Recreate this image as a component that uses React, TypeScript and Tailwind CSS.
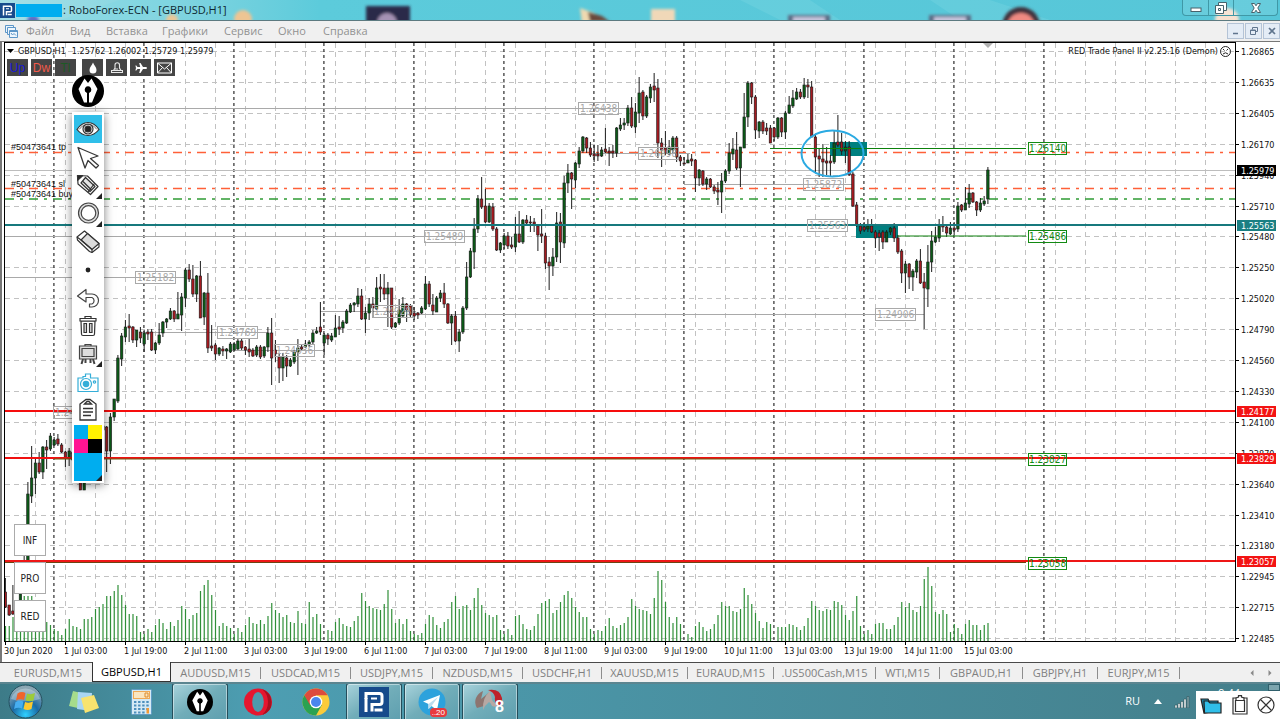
import React from "react";

const SMALL = "font-['DejaVu_Sans_Condensed','DejaVu_Sans',sans-serif]";

/* Each bar: [high, open, close, low] in chart units; a smaller value is a higher price. */
const BARS: number[][] = [
  [578, 592, 607, 608], [605, 605, 615, 616], [585, 611, 614, 615], [600, 614, 606, 618], [590, 612, 594, 615],
  [555, 580, 570, 590], [482, 570, 494, 575], [446, 496, 478, 503], [458, 478, 463, 494], [452, 463, 472, 474],
  [446, 472, 447, 479], [440, 447, 450, 469], [433, 449, 436, 451], [437, 445, 440, 446], [434, 439, 444, 446],
  [443, 445, 452, 453], [451, 452, 458, 467], [448, 458, 451, 466], [450, 452, 460, 466], [455, 460, 470, 478],
  [465, 470, 490, 490], [465, 490, 470, 490], [460, 478, 465, 483], [450, 465, 455, 470], [430, 455, 440, 460],
  [420, 440, 428, 445], [415, 430, 426, 440], [426, 427, 451, 472], [413, 451, 417, 464], [399, 417, 399, 421],
  [355, 401, 358, 403], [333, 359, 336, 366], [320, 337, 327, 342], [314, 326, 328, 342], [326, 327, 340, 343],
  [330, 340, 330, 347], [327, 332, 338, 343], [330, 344, 333, 352], [329, 332, 334, 340], [329, 332, 350, 351],
  [342, 350, 343, 354], [323, 343, 335, 345], [321, 333, 322, 337], [318, 322, 319, 328], [308, 319, 311, 320],
  [310, 311, 319, 322], [292, 319, 314, 319], [293, 315, 297, 331], [268, 298, 270, 307], [264, 270, 279, 282],
  [265, 279, 294, 297], [275, 294, 276, 302], [261, 276, 318, 318], [292, 317, 293, 325], [273, 293, 348, 353],
  [325, 346, 348, 351], [343, 345, 354, 360], [347, 354, 348, 356], [346, 349, 351, 356], [348, 351, 349, 359],
  [342, 352, 344, 353], [342, 350, 344, 351], [339, 349, 341, 350], [338, 341, 348, 350], [346, 347, 350, 355],
  [339, 349, 352, 357], [348, 350, 356, 357], [345, 355, 347, 357], [345, 347, 357, 359], [346, 356, 347, 358],
  [327, 347, 333, 352], [318, 333, 358, 385], [340, 350, 354, 362], [353, 357, 368, 383], [353, 368, 357, 381],
  [355, 358, 366, 377], [358, 366, 360, 367], [350, 362, 352, 364], [339, 352, 348, 375], [345, 347, 349, 350],
  [340, 347, 344, 348], [340, 345, 342, 347], [330, 342, 333, 345], [327, 333, 331, 334], [302, 327, 332, 335],
  [333, 343, 335, 355], [333, 335, 339, 345], [333, 340, 336, 342], [315, 337, 328, 337], [316, 327, 329, 335],
  [320, 328, 322, 333], [309, 323, 311, 324], [303, 312, 305, 313], [302, 305, 303, 312], [288, 304, 296, 307],
  [289, 296, 319, 320], [307, 319, 313, 333], [298, 313, 304, 320], [297, 304, 308, 318], [277, 309, 288, 310],
  [274, 287, 289, 302], [274, 288, 294, 300], [282, 294, 288, 327], [288, 288, 327, 329], [322, 327, 323, 328],
  [299, 323, 310, 325], [297, 316, 304, 318], [303, 304, 310, 322], [304, 306, 315, 317], [307, 313, 316, 320],
  [312, 313, 315, 319], [306, 313, 308, 314], [276, 309, 284, 310], [281, 284, 304, 307], [294, 305, 311, 315],
  [296, 312, 298, 312], [290, 298, 293, 302], [283, 293, 304, 308], [303, 304, 323, 324], [314, 323, 316, 345],
  [311, 316, 341, 342], [329, 341, 332, 352], [306, 332, 308, 334], [262, 308, 277, 310], [248, 277, 251, 278],
  [218, 252, 229, 269], [195, 229, 199, 233], [177, 199, 207, 209], [189, 206, 222, 223], [203, 222, 206, 223],
  [203, 207, 229, 231], [227, 229, 250, 251], [242, 250, 243, 253], [233, 245, 236, 249], [232, 236, 246, 249],
  [237, 245, 247, 249], [217, 247, 234, 252], [211, 234, 242, 243], [219, 242, 220, 244], [215, 220, 223, 225],
  [216, 222, 223, 232], [218, 222, 224, 232], [225, 226, 235, 251], [209, 234, 236, 243], [233, 236, 263, 269],
  [257, 262, 266, 290], [248, 266, 257, 276], [212, 257, 223, 262], [213, 222, 242, 263], [176, 243, 183, 248],
  [164, 183, 173, 193], [172, 173, 179, 209], [162, 180, 163, 188], [147, 164, 151, 168], [136, 151, 137, 153],
  [137, 138, 148, 153], [142, 148, 155, 157], [145, 154, 156, 162], [145, 154, 156, 161], [147, 156, 150, 157],
  [128, 149, 152, 153], [147, 151, 153, 166], [145, 151, 153, 158], [127, 153, 128, 157], [118, 129, 125, 131],
  [118, 125, 123, 130], [105, 123, 108, 126], [97, 108, 126, 128], [103, 127, 112, 133], [77, 113, 93, 123],
  [90, 92, 116, 120], [95, 116, 97, 118], [84, 98, 87, 103], [73, 86, 90, 102], [79, 88, 143, 158],
  [138, 143, 150, 167], [131, 148, 153, 155], [140, 154, 147, 155], [136, 150, 138, 153], [136, 138, 157, 162],
  [155, 157, 161, 166], [157, 163, 164, 164], [154, 163, 160, 163], [154, 159, 161, 166], [159, 160, 178, 192],
  [169, 178, 170, 186], [170, 171, 184, 186], [177, 184, 179, 190], [178, 179, 187, 188], [185, 187, 191, 194],
  [182, 190, 192, 205], [173, 192, 181, 213], [169, 181, 171, 183], [143, 171, 153, 174], [138, 154, 149, 160],
  [132, 150, 168, 170], [147, 168, 147, 187], [93, 148, 117, 148], [81, 117, 83, 127], [82, 83, 97, 104],
  [95, 97, 130, 139], [121, 131, 122, 138], [120, 122, 131, 134], [123, 128, 131, 135], [125, 128, 143, 143],
  [127, 128, 137, 141], [117, 137, 118, 139], [117, 118, 132, 137], [111, 132, 113, 139], [96, 113, 105, 114],
  [90, 106, 98, 108], [88, 99, 92, 100], [89, 92, 97, 99], [78, 97, 85, 99], [79, 85, 87, 98],
  [81, 87, 137, 137], [135, 137, 157, 172], [148, 156, 159, 177], [144, 159, 162, 177], [147, 161, 163, 175],
  [155, 161, 163, 177], [130, 162, 143, 164], [115, 142, 145, 147], [133, 142, 151, 155], [141, 151, 147, 163],
  [141, 147, 175, 176], [172, 174, 206, 207], [202, 205, 225, 227], [223, 226, 231, 234], [222, 227, 230, 232],
  [219, 229, 226, 232], [219, 226, 232, 233], [230, 232, 238, 248], [230, 233, 237, 251], [230, 232, 242, 249],
  [230, 242, 232, 242], [227, 232, 228, 235], [223, 228, 238, 242], [235, 238, 252, 254], [249, 251, 273, 283],
  [261, 273, 264, 293], [263, 264, 277, 289], [269, 277, 271, 291], [259, 272, 261, 278], [249, 261, 283, 284],
  [273, 282, 288, 329], [245, 289, 262, 307], [231, 262, 241, 272], [227, 242, 237, 243], [219, 238, 226, 242],
  [216, 225, 227, 232], [225, 227, 233, 237], [222, 234, 228, 235], [222, 228, 230, 235], [202, 229, 206, 232],
  [204, 205, 210, 212], [187, 210, 203, 210], [184, 204, 193, 208], [192, 193, 202, 203], [201, 202, 210, 216],
  [198, 210, 203, 212], [196, 204, 201, 206], [167, 199, 170, 204],
];

const VOLUMES: number[] = [
  16, 16, 25, 30, 40, 46, 46, 46, 38, 30, 24, 20, 17, 13, 11, 7, 13, 23, 16, 15, 13, 23, 23, 25, 33, 35, 38, 46, 46, 51,
  57, 47, 37, 28, 28, 26, 10, 8, 13, 10, 17, 23, 19, 13, 20, 16, 22, 36, 33, 23, 27, 29, 51, 57, 62, 47, 32, 16, 19, 16,
  14, 8, 14, 10, 17, 25, 19, 18, 22, 18, 26, 39, 32, 29, 25, 27, 20, 19, 31, 19, 18, 40, 25, 28, 18, 0, 12, 11, 20, 24,
  18, 16, 15, 21, 26, 49, 41, 36, 34, 33, 32, 38, 52, 33, 19, 23, 18, 23, 11, 8, 7, 9, 18, 27, 25, 17, 14, 20, 23, 40,
  46, 33, 36, 37, 32, 44, 54, 37, 29, 27, 25, 27, 12, 8, 13, 7, 26, 27, 18, 13, 12, 16, 28, 39, 41, 43, 29, 32, 40, 47,
  51, 44, 35, 30, 25, 25, 13, 8, 12, 11, 16, 24, 16, 14, 17, 19, 25, 43, 36, 33, 32, 31, 28, 44, 71, 62, 40, 25, 19, 25,
  18, 0, 8, 5, 16, 20, 15, 11, 13, 18, 27, 40, 36, 36, 31, 30, 33, 54, 47, 38, 29, 21, 14, 20, 18, 0, 15, 15, 15, 18,
  17, 15, 12, 16, 24, 41, 36, 32, 31, 33, 32, 41, 40, 37, 27, 22, 31, 46, 16, 8, 12, 8, 18, 19, 19, 13, 13, 17, 25, 40,
  35, 39, 32, 30, 36, 63, 75, 56, 30, 28, 32, 28, 10, 18, 14, 8, 18, 22, 17, 17, 12, 17, 19,
];

const PRICES = [
  "1.26865", "1.26635", "1.26405", "1.26170", "1.25940", "1.25710", "1.25480", "1.25250", "1.25020", "1.24790",
  "1.24560", "1.24330", "1.24100", "1.23870", "1.23640", "1.23410", "1.23180", "1.22945", "1.22715", "1.22485",
];

const DATES = [
  "30 Jun 2020", "1 Jul 03:00", "1 Jul 19:00", "2 Jul 11:00", "3 Jul 03:00", "3 Jul 19:00", "6 Jul 11:00",
  "7 Jul 03:00", "7 Jul 19:00", "8 Jul 11:00", "9 Jul 03:00", "9 Jul 19:00", "10 Jul 11:00", "13 Jul 03:00",
  "13 Jul 19:00", "14 Jul 11:00", "15 Jul 03:00",
];

/* Swing levels: [text, label x, y, line start, line end] */
const LEVELS: [string, number, number, number, number][] = [
  ["1.26438", 579, 108, 5, 628],
  ["1.25182", 136, 277, 5, 185],
  ["1.24769", 218, 332, 140, 268],
  ["1.24636", 275, 350, 225, 323],
  ["1.24928", 373, 311, 320, 416],
  ["1.25489", 425, 236, 5, 474],
  ["1.24906", 876, 314, 413, 924],
  ["1.26098", 639, 153, 590, 690],
  ["1.25872", 804, 184, 684, 854],
  ["1.25563", 808, 225, 800, 856],
  ["1.24173", 54, 412, 54, 95],
];

const TARGETS: [string, number][] = [
  ["1.26140", 148],
  ["1.25486", 236],
  ["1.23827", 459],
  ["1.23058", 563],
];

const gridY = (k: number) => Math.round(51 + k * 30.9) + 0.5;

function PriceChart() {
  return (
    <svg className="absolute inset-0 h-full w-full" role="img" aria-label="GBPUSD H1">
      <g transform="translate(-5 -43)">
        <g stroke="#c2c2c2" strokeWidth="1" strokeDasharray="5 4">
          {PRICES.map((p, k) => (
            <line key={p} x1="5" x2="110%" y1={gridY(k)} y2={gridY(k)} />
          ))}
          {Array.from({ length: 80 }, (_, k) => (
            <line key={k} x1={35.5 + k * 30} x2={35.5 + k * 30} y1="43" y2="120%" />
          ))}
        </g>
        <g stroke="#3c3c3c" strokeWidth="1.3" strokeDasharray="3 3">
          {Array.from({ length: 12 }, (_, k) => (
            <line key={k} x1={53.9 + k * 90} x2={53.9 + k * 90} y1="43" y2="120%" />
          ))}
        </g>
        <path d="M983 43h10l-5 5z" fill="#b0b0b0" />

        <line x1="5" x2="110%" y1="170.5" y2="170.5" stroke="#bdbdbd" />
        <g stroke="#ff6038" strokeWidth="1.4" strokeDasharray="9 6 3 6">
          <line x1="5" x2="110%" y1="152.5" y2="152.5" />
          <line x1="5" x2="110%" y1="188.5" y2="188.5" />
        </g>
        <line x1="5" x2="110%" y1="199" y2="199" stroke="#2f9c35" strokeWidth="1.4" strokeDasharray="9 6 3 6" />

        {LEVELS.map(([t, , y, a, b]) => (
          <line key={t} x1={a} x2={b} y1={y + 0.5} y2={y + 0.5} stroke="#a9a9a9" />
        ))}

        <rect x="830" y="142" width="37" height="14" fill="#008080" />
        <rect x="856" y="224" width="42" height="14" fill="#008080" />

        <g stroke="#2f8f38" strokeWidth="1.2">
          {VOLUMES.map((v, i) =>
            v ? <line key={i} x1={5.5 + i * 3.75} x2={5.5 + i * 3.75} y1={642 - v} y2="642" /> : null,
          )}
        </g>

        {BARS.map(([h, o, c, l], i) => {
          const x = 5.4 + i * 3.75;
          return (
            <g key={i}>
              <line x1={x} x2={x} y1={h} y2={l} stroke="#1c1c1c" strokeWidth="1" />
              <rect
                x={x - 1.2}
                y={Math.min(o, c)}
                width="2.4"
                height={Math.max(1, Math.abs(c - o))}
                fill={c < o ? "#0b5a17" : "#a51a20"}
                stroke="#161616"
                strokeWidth="0.6"
              />
            </g>
          );
        })}

        <line x1="5" x2="110%" y1="225" y2="225" stroke="#16797d" strokeWidth="2" />
        <line x1="5" x2="110%" y1="411" y2="411" stroke="#f60d0d" strokeWidth="2" />
        <line x1="5" x2="110%" y1="458" y2="458" stroke="#f01010" strokeWidth="2" />
        <line x1="5" x2="110%" y1="561" y2="561" stroke="#ee1616" strokeWidth="2" />
        <line x1="54" x2="1026" y1="459" y2="459" stroke="#6d5a12" strokeWidth="1" />
        <line x1="5" x2="1026" y1="562.5" y2="562.5" stroke="#6b4512" strokeWidth="1" />
        <line x1="770" x2="1026" y1="148.5" y2="148.5" stroke="#0c800c" strokeWidth="1" />
        <line x1="898" x2="1026" y1="236" y2="236" stroke="#0c800c" strokeWidth="1" />

        <g className={SMALL} fontSize="10">
          {LEVELS.map(([t, x, y]) => (
            <g key={t}>
              <rect x={x - 0.5} y={y - 5.5} width="40" height="12" fill="none" stroke="#a9a9a9" />
              <text x={x + 1} y={y + 4} fill="#a9a9a9">{t}</text>
            </g>
          ))}
          {TARGETS.map(([t, y]) => (
            <g key={t}>
              <rect x="1028.5" y={y - 5.5} width="38" height="12" fill="none" stroke="#128a12" />
              <text x="1029" y={y + 4} fill="#128a12">{t}</text>
            </g>
          ))}
        </g>
        <ellipse cx="832.5" cy="153.5" rx="31" ry="23" fill="none" stroke="#2baae2" strokeWidth="2" />
        <g className="font-['Liberation_Sans',sans-serif]" fontSize="9" fill="#111">
          <text x="11" y="150">#50473641 tp</text>
          <text x="11" y="187">#50473641 sl</text>
          <text x="11" y="197">#50473641 buy</text>
        </g>
      </g>
    </svg>
  );
}

function PriceAxis() {
  const marks: [string, number, string][] = [
    ["1.25979", 170, "#000000"],
    ["1.25563", 225, "#1a7f83"],
    ["1.24177", 411, "#f31313"],
    ["1.23829", 458, "#f31313"],
    ["1.23057", 561, "#f31313"],
  ];
  return (
    <svg className={`h-full w-11 shrink-0 ${SMALL}`} fontSize="9">
      <g transform="translate(-1236 -42)">
        {PRICES.map((p, k) => (
          <g key={p}>
            <line x1="1236" x2="1239" y1={gridY(k)} y2={gridY(k)} stroke="#000" />
            <text x="1241" y={gridY(k) + 3} fill="#111">{p}</text>
          </g>
        ))}
        {marks.map(([t, y, c]) => (
          <g key={t}>
            <rect x="1237" y={y - 5} width="39" height="11" fill={c} />
            <text x="1241" y={y + 3.5} fill="#fff">{t}</text>
          </g>
        ))}
      </g>
    </svg>
  );
}

function PenNib({ className }: { className: string }) {
  return (
    <svg viewBox="0 0 32 32" className={className} aria-hidden="true">
      <circle cx="16" cy="16" r="16" fill="#000" />
      <path d="M12.500 3.500 6.500 14l5.500 13.500H15V17.800a3.300 3.300 0 1 1 2 0V27.500h3L25.500 14 19.500 3.500 16 8z" fill="#fff" />
      <circle cx="16" cy="14.800" r="2.900" fill="#000" />
    </svg>
  );
}

function RoboLogo({ className }: { className: string }) {
  return (
    <svg viewBox="0 0 30 30" className={className} aria-hidden="true">
      <rect width="30" height="30" fill="#164a8b" />
      <path d="M7 12V6.500h13.500q2.500 0 2.500 2.500v6q0 2.500-2.500 2.500H13v7" fill="none" stroke="#fff" strokeWidth="3" />
      <path d="M15.500 23h8" stroke="#fff" strokeWidth="3" />
      <path d="M7 11v14" stroke="#fff" strokeWidth="3" />
      <path d="M12 11.500h6" stroke="#fff" strokeWidth="2" />
    </svg>
  );
}

const MENU: [string, string][] = [
  ["Файл", "w-[44px]"], ["Вид", "w-[36px]"], ["Вставка", "w-[56px]"], ["Графики", "w-[62px]"],
  ["Сервис", "w-[54px]"], ["Окно", "w-[45px]"], ["Справка", "w-[60px]"],
];

function TitleBar() {
  return (
    <header className="relative flex h-5 shrink-0 items-center overflow-hidden bg-linear-to-r from-[#a5dfe6] via-[#5ccbdb] via-25% to-[#56c6d8]">
      <svg className="absolute inset-0 h-full w-full" aria-hidden="true">
        <defs>
          <filter id="soft" x="-30%" y="-30%" width="160%" height="160%"><feGaussianBlur stdDeviation="1.500" /></filter>
        </defs>
        <path d="M120 0h60l-40 20H60zM740 0h70l30 20h-60zM930 0h60l60 20h-90z" fill="#7bd7e3" opacity=".35" />
        <g filter="url(#soft)">
          <rect x="366" y="6" width="44" height="18" fill="#2c2c4a" />
          <circle cx="387" cy="23" r="10" fill="#a592b4" />
          <path d="M580 8l14 5 10 10h-22z" fill="#f0d9b0" />
          <path d="M588 12l14 4 8 6h-20z" fill="#6b4a3c" />
          <rect x="651" y="9" width="24" height="16" fill="#f0d8b8" />
          <rect x="788" y="15" width="42" height="9" fill="#5b6c85" />
          <rect x="793" y="17" width="32" height="8" fill="#c6c4dc" />
          <rect x="929" y="15" width="42" height="9" fill="#5b6c85" />
          <rect x="934" y="17" width="32" height="8" fill="#c6c4dc" />
          <circle cx="1021" cy="26" r="19" fill="#40323c" />
          <circle cx="1021" cy="27" r="14" fill="#f08a82" />
          <circle cx="243" cy="19" r="9" fill="#eec593" />
          <circle cx="172" cy="20" r="6" fill="#e8c898" />
          <circle cx="33" cy="21" r="6" fill="#5f6ec4" />
          <circle cx="1227" cy="20" r="12" fill="#f7e1d0" />
        </g>
      </svg>
      <RoboLogo className="relative h-[15px] w-[15px]" />
      <span className="relative ml-px h-[13px] w-[46px] bg-[#00adef]" />
      <h1 className="relative ml-px font-['Open_Sans',sans-serif] text-[11px] whitespace-nowrap text-[#0d2830]">
        : RoboForex-ECN - [GBPUSD,H1]
      </h1>
      <div className="relative mr-[2px] ml-auto flex h-4 self-start rounded-b border border-t-0 border-[#3f98a6] bg-white/10">
        <button aria-label="Свернуть" className="flex w-[26px] items-center justify-center border-r border-[#3f98a6]">
          <svg className="h-3 w-3" viewBox="0 0 12 12"><rect x="1" y="6" width="10" height="3.500" fill="#fff" stroke="#47636c" /></svg>
        </button>
        <button aria-label="Восстановить" className="flex w-[25px] items-center justify-center border-r border-[#3f98a6]">
          <svg className="h-3 w-3" viewBox="0 0 12 12" fill="#fff" stroke="#47636c"><path d="M3.500 .5h8v8h-8z" /><path d="M.5 3.500h8v8h-8z" /><path d="M3.500 6.500h2v2h-2z" /></svg>
        </button>
        <button aria-label="Закрыть" className="flex w-[43px] items-center justify-center">
          <svg className="h-3 w-3" viewBox="0 0 12 12"><path d="M1.500 1.500h3L6 3.800l1.500-2.300h3L7.800 6l2.700 4.500h-3L6 8.200l-1.500 2.300h-3L4.200 6z" fill="#fff" stroke="#47636c" /></svg>
        </button>
      </div>
    </header>
  );
}

function MenuBar() {
  const box = "flex h-4 w-[17px] items-center justify-center border border-[#b4c3d6] bg-[#e4ecf6]";
  return (
    <nav className="flex h-[21px] shrink-0 items-center border-t border-[#5c7a80] bg-[#f0f0f0] pl-[5px] font-['Open_Sans',sans-serif] text-[11px] text-[#929292]">
      <svg className="mr-2 h-[13px] w-[13px]" viewBox="0 0 13 13" fill="#eef6fd" stroke="#5d96c8" aria-hidden="true">
        <path d="M.5.5h8v7h-8z" /><path d="M2.500 2.500h8v7h-8z" /><path d="M4.500 5.500h8v7h-8z" /><path d="M6 8l1.500 2L9 8.500l2 2M4.500 6.500h8" />
      </svg>
      {MENU.map(([label, w]) => (
        <button key={label} className={`text-left leading-[18px] ${w}`}>{label}</button>
      ))}
      <div className="ml-auto flex gap-px">
        <button aria-label="Свернуть график" className={box}><svg className="h-2 w-2" viewBox="0 0 8 8"><path d="M1 6.500h5" stroke="#60758e" strokeWidth="1.500" /></svg></button>
        <button aria-label="Восстановить график" className={box}><svg className="h-2 w-2" viewBox="0 0 8 8" fill="none" stroke="#60758e"><path d="M2.500 2.500v-2h5v4h-2M.5 3h5v4.500h-5zM.5 3.500h5" /></svg></button>
        <button aria-label="Закрыть график" className={box}><svg className="h-2 w-2" viewBox="0 0 8 8"><path d="M1 1l6 6M7 1L1 7" stroke="#60758e" strokeWidth="1.700" /></svg></button>
      </div>
    </nav>
  );
}

function QuickButtons() {
  const b = "flex h-[17px] w-[21px] items-center justify-center bg-[#454545] font-['Liberation_Sans',sans-serif] text-[12px] leading-none";
  return (
    <div className="flex gap-[6px]">
      <div className="flex gap-[3px]">
        <button className={`${b} text-[#1616d8]`}>Up</button>
        <button className={`${b} text-[#f2594a]`}>Dw</button>
        <button className={`${b} text-[#1d5a24]`}>Tl</button>
      </div>
      <div className="flex gap-[3px]">
        <button aria-label="Цвет" className={b}><svg className="h-3 w-3" viewBox="0 0 12 12"><path d="M6 .5C7 3.500 9.500 5 9.500 8a3.500 3.500 0 0 1-7 0C2.500 5 5 3.500 6 .5z" fill="#fff" /></svg></button>
        <button aria-label="Звонок" className={b}><svg className="h-3 w-3" viewBox="0 0 12 12" fill="none" stroke="#e8e8e8" strokeWidth="1.100"><path d="M.5 10.500h11v-2h-11zM2.500 8.500l1.500-2.500V3a2 2 0 0 1 4.500 0v3l1.500 2.500M7 7H3.500" /></svg></button>
        <button aria-label="Самолёт" className={b}><svg className="h-3 w-3" viewBox="0 0 12 12"><path d="M12 6c0 .7-.8 1-1.500 1H8L5.500 11H4.200l1-4H2.500L1.300 8.500H.4L1 6 .4 3.500h.9L2.500 5h2.700l-1-4h1.300L8 5h2.500c.7 0 1.500.3 1.500 1z" fill="#fff" /></svg></button>
        <button aria-label="Почта" className={b}><svg className="h-3 w-[15px]" viewBox="0 0 15 12" fill="none" stroke="#fff"><path d="M.5 1h14v10H.5zM.5 1l7 6 7-6M.5 11l5-5.500M14.500 11l-5-5.500" /></svg></button>
      </div>
    </div>
  );
}

const tool = "relative flex h-[28px] w-[28px] shrink-0 items-center justify-center";
const ico = "h-6 w-6";

function Corner() {
  return (
    <svg className="absolute right-0 bottom-0 h-[6px] w-[6px]" viewBox="0 0 6 6" aria-hidden="true"><path d="M6 0v6H0z" fill="#222" /></svg>
  );
}

function DrawTools() {
  return (
    <aside className="absolute top-[69px] left-[67px] flex w-8 flex-col items-center bg-white pt-[3px] pb-[2px] shadow-[0_2px_9px_rgba(0,0,0,0.5)]">
      <button aria-label="Показать" className={`${tool} bg-[#30bfe9]`}>
        <svg className={ico} viewBox="0 0 24 24" fill="#fff" stroke="#333" strokeWidth="1.200">
          <path d="M1 12.500C5 6.500 9 5.500 12 5.500s7 1 11 7c-4 5-7.500 6-11 6s-7-1-11-6z" />
          <circle cx="12" cy="12" r="5" /><circle cx="12" cy="12" r="3" fill="#222" />
          <path d="M3 12.500c3-3.800 6-5 9-5s6 1.200 9 5" fill="none" strokeWidth=".7" />
        </svg>
      </button>
      <button aria-label="Курсор" className={tool}>
        <svg className={ico} viewBox="0 0 24 24" fill="#fff" stroke="#383838" strokeWidth="1.300" strokeLinejoin="round"><path d="M2 2.500l20 8.500-7.500 2.500 8 7-2.500 2.500-8-7.500-3 7.500z" /></svg>
      </button>
      <button aria-label="Карандаш" className={tool}>
        <svg className={ico} viewBox="0 0 24 24" fill="#fff" stroke="#333" strokeWidth="1.200" strokeLinejoin="round"><path d="M1.500 2.500l10 .5L22 13.500l-7.500 8L2 11z" /><path d="M1.500 2.500l5 .2-4.800 4.600z" fill="#222" /><path d="M5 10l4.500-5.500 9.500 9-5 5z" fill="#e4e4e4" /><path d="M7 8.500l8.500 8.500M18.500 10.500L12 19" fill="none" /></svg>
        <Corner />
      </button>
      <button aria-label="Фигура" className={tool}>
        <svg className={ico} viewBox="0 0 24 24" fill="#fff" stroke="#444" strokeWidth="1.200"><circle cx="12.500" cy="12" r="10" fill="#ddd" /><circle cx="12.500" cy="12" r="7.300" /></svg>
        <Corner />
      </button>
      <button aria-label="Ластик" className={tool}>
        <svg className={ico} viewBox="0 0 24 24" fill="#fff" stroke="#333" strokeWidth="1.200" strokeLinejoin="round"><path d="M1 8l7.500-6L23 14.500V18l-7 5.500-2.500-1L1.500 11z" /><path d="M5 11l6.500-6.500L23 14.500l-7 6z" fill="#dcdcdc" /><path d="M1 8l4 3 11 9.500v3" fill="none" /></svg>
      </button>
      <button aria-label="Толщина" className={tool}>
        <svg className={ico} viewBox="0 0 24 24"><circle cx="12" cy="13" r="2.400" fill="#222" /></svg>
      </button>
      <button aria-label="Отменить" className={tool}>
        <svg className={ico} viewBox="0 0 24 24" fill="#fff" stroke="#444" strokeWidth="1.200" strokeLinejoin="round"><path d="M1.500 11L10 4.500V9h6a6.500 6.500 0 0 1 0 13h-2.500v-3H16a3.300 3.500 0 0 0 0-6.500h-6V17z" /></svg>
      </button>
      <button aria-label="Удалить" className={tool}>
        <svg className={ico} viewBox="0 0 24 24" fill="#fff" stroke="#333" strokeWidth="1.200"><path d="M5 8h14l-.5 13q0 1.500-1.500 1.500H7q-1.500 0-1.500-1.500z" /><path d="M4 5.500h16V8H4zM9 5.500v-2h6v2" /><path d="M8 10.500h2.500v9H8zM13.500 10.500H16v9h-2.500z" fill="#ddd" /></svg>
      </button>
      <button aria-label="Доска" className={tool}>
        <svg className={ico} viewBox="0 0 24 24" fill="#ddd" stroke="#444" strokeWidth="1.200"><path d="M7 18l-1.500 5M17 18l1.500 5M9.500 18v4M14.500 18v4" fill="none" strokeWidth="2" /><path d="M9 5.500V3.500h6v2M3.500 5h17v13h-17z" /><path d="M6 7.500h12v8H6z" /></svg>
        <Corner />
      </button>
      <button aria-label="Снимок" className={tool}>
        <svg className={ico} viewBox="0 0 24 24" fill="#fff" stroke="#35aed8" strokeWidth="1.200"><path d="M2 9h5V7.500h2.500V5h5v4H22v13.500H2z" /><circle cx="10" cy="15" r="5.500" /><circle cx="10" cy="15" r="2.700" fill="#35aed8" /><circle cx="18.500" cy="13" r="1.200" /></svg>
      </button>
      <button aria-label="Буфер" className={tool}>
        <svg className={ico} viewBox="0 0 24 24" fill="#fff" stroke="#333" strokeWidth="1.300"><path d="M4 7l6-4.500h4L20 7v16H4z" /><path d="M8.500 7L11 4.500h2L15.500 7zM7 11.500h10M7 15h10M7 18.500h8" /></svg>
      </button>
      <div className="mt-[2px] grid w-[28px] grid-cols-2">
        <button aria-label="Голубой" className="h-[14px] bg-[#00adef]" />
        <button aria-label="Жёлтый" className="h-[14px] bg-[#fff200]" />
        <button aria-label="Пурпурный" className="h-[14px] bg-[#ff1493]" />
        <button aria-label="Чёрный" className="h-[14px] bg-black" />
      </div>
      <button aria-label="Текущий цвет" className={`${tool} bg-[#00adef]`}><Corner /></button>
    </aside>
  );
}

const TABS: [string, string][] = [
  ["AUDUSD,M15", "w-[90px]"], ["USDCAD,M15", "w-[90px]"], ["USDJPY,M15", "w-[82px]"], ["NZDUSD,M15", "w-[90px]"],
  ["USDCHF,H1", "w-[79px]"], ["XAUUSD,M15", "w-[86px]"], ["EURAUD,M15", "w-[86px]"], [".US500Cash,M15", "w-[102px]"],
  ["WTI,M15", "w-[64px]"], ["GBPAUD,H1", "w-[83px]"], ["GBPJPY,H1", "w-[75px]"], ["EURJPY,M15", "w-[82px]"],
];

function ChartTabs() {
  return (
    <div role="tablist" className="flex h-5 shrink-0 items-stretch border-t border-[#4a4a4a] bg-[#f0f0f0] pl-1 font-['Open_Sans',sans-serif] text-[11px] whitespace-nowrap text-[#808080]">
      <button role="tab" className="w-[88px] leading-[17px]">EURUSD,M15</button>
      <button role="tab" aria-selected="true" className="-mt-px w-[79px] border border-t-0 border-[#333] bg-white leading-[17px] text-black">GBPUSD,H1</button>
      {TABS.map(([t, w]) => (
        <button key={t} role="tab" className={`${w} flex items-center justify-center`}>
          <span className="flex-1 leading-[17px]">{t}</span>
          <span className="h-3 w-px bg-[#8d8d8d]" />
        </button>
      ))}
      <div className="mr-[7px] ml-auto flex items-center gap-3">
        <button aria-label="Назад"><svg className="h-[6px] w-[6px]" viewBox="0 0 6 6"><path d="M4.500 0v6l-3-3z" fill="#888" /></svg></button>
        <button aria-label="Вперёд"><svg className="h-[6px] w-[6px]" viewBox="0 0 6 6"><path d="M1.500 0v6l3-3z" fill="#888" /></svg></button>
      </div>
    </div>
  );
}

const cell = "flex h-full w-[58px] shrink-0 items-center justify-center";
const openCell = "flex h-[37px] w-[56px] items-center justify-center rounded-t-[3px] border border-b-0 border-[#264e5b] bg-linear-to-br from-[#a8d3dc] via-[#71adb9] to-[#5e9faf] shadow-[inset_0_0_0_1px_rgba(255,255,255,0.45)]";

function Taskbar() {
  return (
    <footer className="flex h-[37px] shrink-0 items-center overflow-hidden border-t-2 border-[#5b8590] bg-linear-to-r from-[#3d7b88] via-[#4d9eb2] via-20% to-[#447f8b]">
      <button aria-label="Пуск" className="flex w-[55px] items-center pl-2">
        <svg className="h-[35px] w-[35px]" viewBox="0 0 35 35">
          <defs>
            <radialGradient id="orb" cx="50%" cy="90%" r="80%"><stop offset="0" stopColor="#2fd0ff" /><stop offset=".5" stopColor="#1b6aa5" /><stop offset="1" stopColor="#8ba7b4" /></radialGradient>
          </defs>
          <circle cx="17.500" cy="17.500" r="16.500" fill="url(#orb)" stroke="#24505f" />
          <path d="M3 15a15 14 0 0 1 29 0Q17 20 3 15z" fill="#fff" opacity=".3" />
          <path d="M9.500 9.500q4-2.500 8-.5L16 16q-4-1.500-8 .5z" fill="#f0642c" />
          <path d="M19 9.500q4 1.500 8-.5l-1.500 7.500q-4 1.500-8 0z" fill="#9ccb3b" />
          <path d="M7.500 18q4-2 8-.5L14 24.500q-4-1.500-8 .5z" fill="#47aef0" />
          <path d="M17 18q4 1.500 8-.5L23.500 25q-4 2-8 0z" fill="#fdc92f" />
        </svg>
      </button>
      <button aria-label="Записки" className={cell}>
        <svg className="h-8 w-8" viewBox="0 0 32 32"><path d="M5 5l12 3-3 15-13-3z" fill="#a6dc8c" /><path d="M10 6l14 1-1 18-14-2z" fill="#a9d6f3" /><path d="M13 12l13-3 5 13-14 5z" fill="#f8e36f" /></svg>
      </button>
      <button aria-label="Калькулятор" className={cell}>
        <svg className="h-7 w-6" viewBox="0 0 24 28"><rect x="1.500" y="1.500" width="20" height="25" rx="1" fill="#d5eaf5" stroke="#5f9cc4" /><rect x="3.500" y="3.500" width="16" height="7" fill="#fbe6c0" stroke="#f0a955" /><path d="M15 5h3v4h-3z" fill="none" stroke="#dd8c2c" /><path d="M4 14h15M4 17.500h15M4 21h15M4 24.500h11" stroke="#4c8fbd" strokeWidth="2" strokeDasharray="2.400 1.700" /><path d="M16.500 20h2.500v5.500h-2.500z" fill="#f29a34" /></svg>
      </button>
      <div className={cell}><button aria-label="Epic Pen" className={openCell}><PenNib className="h-[26px] w-[26px]" /></button></div>
      <button aria-label="Opera" className={cell}>
        <svg className="h-7 w-7" viewBox="0 0 28 28"><ellipse cx="14" cy="14" rx="14" ry="13.500" fill="#e5162f" /><path d="M18 1q9 3 9.500 13T18 27q6-5 6-13T18 1z" fill="#a8101f" /><ellipse cx="14" cy="14" rx="5.800" ry="10" fill="#4d9aad" /></svg>
      </button>
      <button aria-label="Chrome" className={cell}>
        <svg className="h-7 w-7" viewBox="0 0 28 28"><circle cx="14" cy="14" r="13.500" fill="#fbcb3a" /><path d="M14 14L2.300 7.250A13.500 13.500 0 0 1 25.700 7.250H14z" fill="#dd4b3e" /><path d="M14 14h-6L2.300 7.250A13.500 13.500 0 0 0 14 27.500L19.800 17z" fill="#2ba251" /><path d="M2.300 7.250L8 17l6-10z" fill="#dd4b3e" /><circle cx="14" cy="14" r="6.300" fill="#fff" /><circle cx="14" cy="14" r="5" fill="#4a86ee" /></svg>
      </button>
      <div className={cell}><button aria-label="RoboForex" className={openCell}><RoboLogo className="h-[30px] w-[30px]" /></button></div>
      <div className={cell}>
        <button aria-label="Telegram" className={`${openCell} relative`}>
          <svg className="h-7 w-7" viewBox="0 0 28 28"><circle cx="14" cy="14" r="13.500" fill="#2da2dc" /><path d="M5 13.500L22 7l-3 15-5.500-4-3 3v-5z" fill="#fff" /><path d="M10.500 16L20 9l-6.500 9-3 3z" fill="#bcdcef" /></svg>
          <span className="absolute right-3 bottom-[3px] rounded-sm bg-[#e8393d] px-[2px] font-['Liberation_Sans',sans-serif] text-[8px] leading-[9px] text-white">..20</span>
        </button>
      </div>
      <div className={cell}>
        <button aria-label="Терминал 8" className={`${openCell} relative`}>
          <svg className="h-7 w-8" viewBox="0 0 32 28"><path d="M3 20A13 12 0 0 1 9 3l-2 8 10-8q-7 7-7 15z" fill="#8d7570" /><path d="M9 22Q8 10 16 3l2 9q5 7 8 1-1 8-8 5-1-3-3-4-4 3-6 8z" fill="#b7a8a3" /><path d="M14 2q12-2 14 8 1 7-4 8-4-4-3-9-1-5-7-7z" fill="#be222a" /></svg>
          <span className="absolute right-[13px] bottom-[5px] font-['Liberation_Sans',sans-serif] text-base leading-none font-bold text-white">8</span>
        </button>
      </div>
      <div className="ml-auto flex h-full items-center">
        <button className="mr-[14px] font-['Open_Sans',sans-serif] text-[11px] text-white">RU</button>
        <button aria-label="Скрытые значки" className="mr-3"><svg className="h-[5px] w-2" viewBox="0 0 8 5"><path d="M0 5l4-5 4 5z" fill="#fff" /></svg></button>
        <svg className="mr-[6px] h-3 w-4" viewBox="0 0 16 12" fill="#fff" stroke="#33545c" strokeWidth=".6" role="img" aria-label="Сеть"><path d="M1 9h2v3H1zM4 7.500h2V12H4zM7 5.500h2V12H7zM10 3h2v9h-2z" /><path d="M13 .5h2V12h-2z" fill="#86a9b0" /></svg>
        <div className="flex h-full flex-col">
          <div className="flex h-[7px] items-start justify-end overflow-hidden">
            <time className="mr-7 pt-[3px] font-['Open_Sans',sans-serif] text-[11px] leading-3 text-white">9:44</time>
            <span className="h-full w-3 border border-[#2f5f6b] bg-white/30" />
          </div>
          <div className="flex w-[84px] flex-1 items-center justify-between bg-white pr-[5px] pl-1">
            <button aria-label="Папка"><svg className="h-5 w-[22px]" viewBox="0 0 22 20" stroke="#222" strokeWidth="1.200"><path d="M1 4h7l1 2h9v10L4 18z" fill="#1b84a6" /><path d="M4 6h4l2 2h11v10H4.500z" fill="#30bfe9" /></svg></button>
            <button aria-label="Вставить"><svg className="h-5 w-4" viewBox="0 0 16 20" fill="#fff" stroke="#333" strokeWidth="1.200"><path d="M1 3h14v16H1zM3.500 5.500h9v11h-9z" /><path d="M4 3l2.500-1V.7h3V2L12 3v2.500H4z" /></svg></button>
            <button aria-label="Выход"><svg className="h-[18px] w-[18px]" viewBox="0 0 18 18" fill="#fff" stroke="#333" strokeWidth="1.200"><circle cx="9" cy="9" r="8" /><path d="M3.500 3.500l11 11M14.500 3.500l-11 11" /></svg></button>
          </div>
        </div>
      </div>
    </footer>
  );
}

export default function App() {
  const side = "h-8 w-8 border border-[#ababab] bg-white text-[10px] text-[#222]";
  return (
    <div className="flex h-screen min-h-[600px] flex-col overflow-hidden bg-white">
      <TitleBar />
      <MenuBar />
      <main className="flex min-h-0 flex-1 flex-col border-t border-l-2 border-[#777] pl-[2px]">
        <div className="flex min-h-0 flex-1">
          <section className="relative min-w-0 flex-1 border border-black">
            <PriceChart />
            <div className={`absolute inset-x-0 top-0 flex items-center justify-between pt-[2px] pr-1 pl-[2px] text-[9px] leading-3 text-[#111] ${SMALL}`}>
              <div className="flex items-center">
                <svg className="mr-[4px] h-[5px] w-[7px]" viewBox="0 0 7 5" aria-hidden="true"><path d="M0 0h7L3.500 4z" fill="#000" /></svg>
                <span className="mr-[6px]">GBPUSD,H1</span>
                <span>1.25762 1.26002 1.25729 1.25979</span>
              </div>
              <div className="flex items-center gap-[2px]">
                <span>RED Trade Panel II v2.25.16 (Demon)</span>
                <svg className="h-[11px] w-[11px]" viewBox="0 0 11 11" fill="none" stroke="#222" aria-hidden="true"><circle cx="5.500" cy="5.500" r="5" /><path d="M3 8q2.500-2.500 5 0M3 3l1.500 1.500M8 3L6.500 4.500" /></svg>
              </div>
            </div>
            <div className="absolute top-4 left-[2px]"><QuickButtons /></div>
            <PenNib className="absolute top-8 left-[67px] h-8 w-8" />
            <DrawTools />
            <div className={`absolute bottom-[9px] left-[9px] flex flex-col gap-[6px] ${SMALL}`}>
              <button className={side}>INF</button>
              <button className={side}>PRO</button>
              <button className={side}>RED</button>
            </div>
          </section>
          <PriceAxis />
        </div>
        <div className={`flex h-5 shrink-0 overflow-hidden text-[9px] text-[#111] ${SMALL}`}>
          {DATES.map((d) => (
            <div key={d} className="w-[60px] shrink-0 whitespace-nowrap">
              <div className="ml-px h-[3px] w-px bg-black" />
              <div className="leading-[12px]">{d}</div>
            </div>
          ))}
        </div>
      </main>
      <ChartTabs />
      <Taskbar />
    </div>
  );
}
